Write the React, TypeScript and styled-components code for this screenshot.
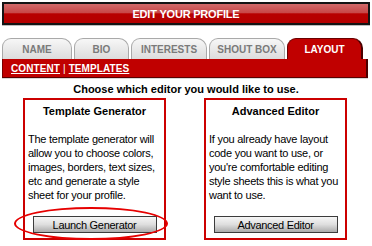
import React from 'react';
import styled, { createGlobalStyle } from 'styled-components';

const GlobalStyle = createGlobalStyle`
  html, body {
    margin: 0;
    padding: 0;
    background: #ffffff;
  }
  body {
    font-family: "Liberation Sans", Arial, sans-serif;
    color: #000000;
  }
`;

type TabType = { label: string, width: number, active?: boolean };

const tabs: TabType[] = [
  { label: 'NAME', width: 70 },
  { label: 'BIO', width: 55 },
  { label: 'INTERESTS', width: 76 },
  { label: 'SHOUT BOX', width: 76 },
  { label: 'LAYOUT', width: 76, active: true }
];

const editors = [
  {
    title: 'Template Generator',
    text: 'The template generator will allow you to choose colors, images, borders, text sizes, etc and generate a style sheet for your profile.',
    button: 'Launch Generator',
    circled: true
  },
  {
    title: 'Advanced Editor',
    text: "If you already have layout code you want to use, or you're comfortable editing style sheets this is what you want to use.",
    button: 'Advanced Editor',
    circled: false
  }
];

export default function App() {
  return (
    <Page>
      <GlobalStyle />
      <Header>EDIT YOUR PROFILE</Header>
      <TabRow>
        {tabs.map((tab, i) => (
          <Tab key={i} active={!!tab.active} width={tab.width}>{tab.label}</Tab>
        ))}
      </TabRow>
      <SubBar>
        <SubLink>CONTENT</SubLink>
        <Separator>|</Separator>
        <SubLink>TEMPLATES</SubLink>
      </SubBar>
      <Prompt>Choose which editor you would like to use.</Prompt>
      <BoxRow>
        {editors.map((editor, i) => (
          <EditorBox key={i}>
            <BoxTitle>{editor.title}</BoxTitle>
            <BoxText>{editor.text}</BoxText>
            <GreyButton>{editor.button}</GreyButton>
            {editor.circled ? <Circle /> : null}
          </EditorBox>
        ))}
      </BoxRow>
    </Page>
  );
}

const Page = styled.div`
  width: 368px;
  padding: 2px 2px 0 2px;
`;

const Header = styled.div`
  height: 19px;
  border: 2px solid #141414;
  background: linear-gradient(to bottom, #d26a6a 0%, #c84848 45%, #b80000 52%, #b40000 100%);
  box-shadow: 0 1px 0 #bdbdbd;
  color: #ffffff;
  font-weight: bold;
  font-size: 11px;
  letter-spacing: -0.2px;
  display: flex;
  align-items: center;
  justify-content: center;
`;

const TabRow = styled.div`
  display: flex;
  gap: 2px;
  margin-top: 13px;
  height: 21px;
`;

const Tab = styled.div<{ active: boolean, width: number }>`
  box-sizing: border-box;
  width: ${(props) => props.width}px;
  height: 21px;
  border: 1px solid ${(props) => props.active ? '#6a0000' : '#a9a9a9'};
  border-right: ${(props) => props.active ? '2px solid #4a0000' : '1px solid #a9a9a9'};
  border-bottom: none;
  border-radius: 9px 10px 0 0;
  background: ${(props) => props.active ? '#c00000' : 'linear-gradient(to bottom, #f7f7f7, #dcdcdc)'};
  color: ${(props) => props.active ? '#ffffff' : '#7a7a7a'};
  font-weight: bold;
  font-size: 10px;
  display: flex;
  align-items: center;
  justify-content: center;
  padding-top: 1px;
`;

const SubBar = styled.div`
  box-sizing: border-box;
  width: 366px;
  height: 19px;
  background: #c00000;
  border-left: 1px solid #7a0000;
  border-right: 2px solid #4a0000;
  border-bottom: 1px solid #5a0000;
  box-shadow: 0 1px 0 #d8d8d8;
  display: flex;
  align-items: center;
  gap: 3px;
  padding-left: 8px;
  color: #ffffff;
  font-size: 10px;
`;

const SubLink = styled.span`
  font-weight: bold;
  text-decoration: underline;
  letter-spacing: 0.1px;
`;

const Separator = styled.span`
  font-weight: normal;
`;

const Prompt = styled.div`
  margin-top: 4px;
  line-height: 14px;
  text-align: center;
  font-weight: bold;
  font-size: 11px;
`;

const BoxRow = styled.div`
  display: flex;
  gap: 38px;
  margin-top: 2px;
  padding-left: 21px;
`;

const EditorBox = styled.div`
  position: relative;
  box-sizing: border-box;
  width: 143px;
  height: 142px;
  border: 2px solid #cc0000;
  padding: 0 3px 5px 3px;
  display: flex;
  flex-direction: column;
`;

const BoxTitle = styled.div`
  margin-top: 4px;
  line-height: 14px;
  text-align: center;
  font-weight: bold;
  font-size: 11px;
`;

const BoxText = styled.div`
  margin-top: 14px;
  line-height: 14px;
  font-size: 11px;
  letter-spacing: -0.25px;
`;

const GreyButton = styled.div`
  box-sizing: border-box;
  margin-top: auto;
  align-self: center;
  width: 124px;
  height: 17px;
  border: 1px solid #3c3c3c;
  background: linear-gradient(to bottom, #f6f6f6 0%, #dedede 50%, #ababab 100%);
  font-size: 11px;
  letter-spacing: -0.3px;
  display: flex;
  align-items: center;
  justify-content: center;
`;

const Circle = styled.div`
  position: absolute;
  left: -11px;
  top: 107px;
  width: 154px;
  height: 33px;
  box-sizing: border-box;
  border: 2px solid #e60000;
  border-radius: 50%;
  pointer-events: none;
`;
